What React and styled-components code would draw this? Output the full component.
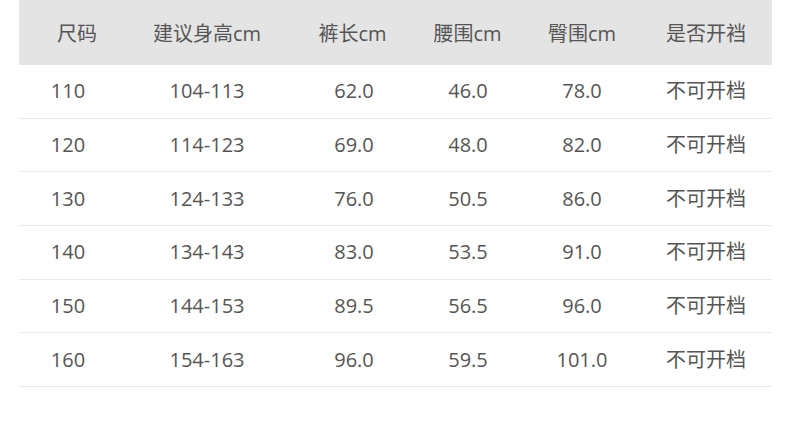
import React from 'react';
import styled, { createGlobalStyle } from 'styled-components';

const GlobalStyle = createGlobalStyle`
  html, body {
    margin: 0;
    padding: 0;
    background: #ffffff;
  }
  body {
    font-family: "Open Sans", "Noto Sans CJK SC", sans-serif;
    color: #555555;
  }
`;

// column widths and horizontal nudges (header / body) to match the source image
const columns = [
  { label: '尺码', width: 106, head: 5, body: -4 },
  { label: '建议身高cm', width: 164, head: 0, body: 0 },
  { label: '裤长cm', width: 136, head: -4.5, body: -3 },
  { label: '腰围cm', width: 86, head: -0.5, body: 0 },
  { label: '臀围cm', width: 142, head: 0, body: 0 },
  { label: '是否开裆', width: 119, head: -6.5, body: -6.5 },
];

const rows = [
  ['110', '104-113', '62.0', '46.0', '78.0', '不可开档'],
  ['120', '114-123', '69.0', '48.0', '82.0', '不可开档'],
  ['130', '124-133', '76.0', '50.5', '86.0', '不可开档'],
  ['140', '134-143', '83.0', '53.5', '91.0', '不可开档'],
  ['150', '144-153', '89.5', '56.5', '96.0', '不可开档'],
  ['160', '154-163', '96.0', '59.5', '101.0', '不可开档'],
];

const Page = styled.div`
  width: 790px;
  height: 431px;
  padding: 0 18px 0 19px;
  box-sizing: border-box;
`;

const Table = styled.div`
  display: flex;
  flex-direction: column;
`;

const Row = styled.div`
  display: grid;
  grid-template-columns: ${columns.map((c) => `${c.width}px`).join(' ')};
  height: ${(p) => (p.$head ? '65px' : '53.7px')};
  background: ${(p) => (p.$head ? '#e4e4e4' : '#ffffff')};
  border-bottom: ${(p) => (p.$head ? 'none' : '1px solid #e8e8e8')};
  box-sizing: border-box;
`;

const Cell = styled.div`
  display: flex;
  align-items: center;
  justify-content: center;
  font-size: 20px;
  line-height: 1;
  color: #555555;
  white-space: nowrap;
  padding-left: ${(p) => (p.$shift > 0 ? p.$shift * 2 : 0)}px;
  padding-right: ${(p) => (p.$shift < 0 ? -p.$shift * 2 : 0)}px;
  padding-top: ${(p) => (p.$head ? 2 : 0)}px;
`;

export default function App() {
  return (
    <>
      <GlobalStyle />
      <Page>
        <Table>
          <Row $head>
            {columns.map((c) => (
              <Cell key={c.label} $head $shift={c.head}>
                {c.label}
              </Cell>
            ))}
          </Row>
          {rows.map((r) => (
            <Row key={r[0]}>
              {r.map((v, i) => (
                <Cell key={i} $shift={columns[i].body}>
                  {v}
                </Cell>
              ))}
            </Row>
          ))}
        </Table>
      </Page>
    </>
  );
}
